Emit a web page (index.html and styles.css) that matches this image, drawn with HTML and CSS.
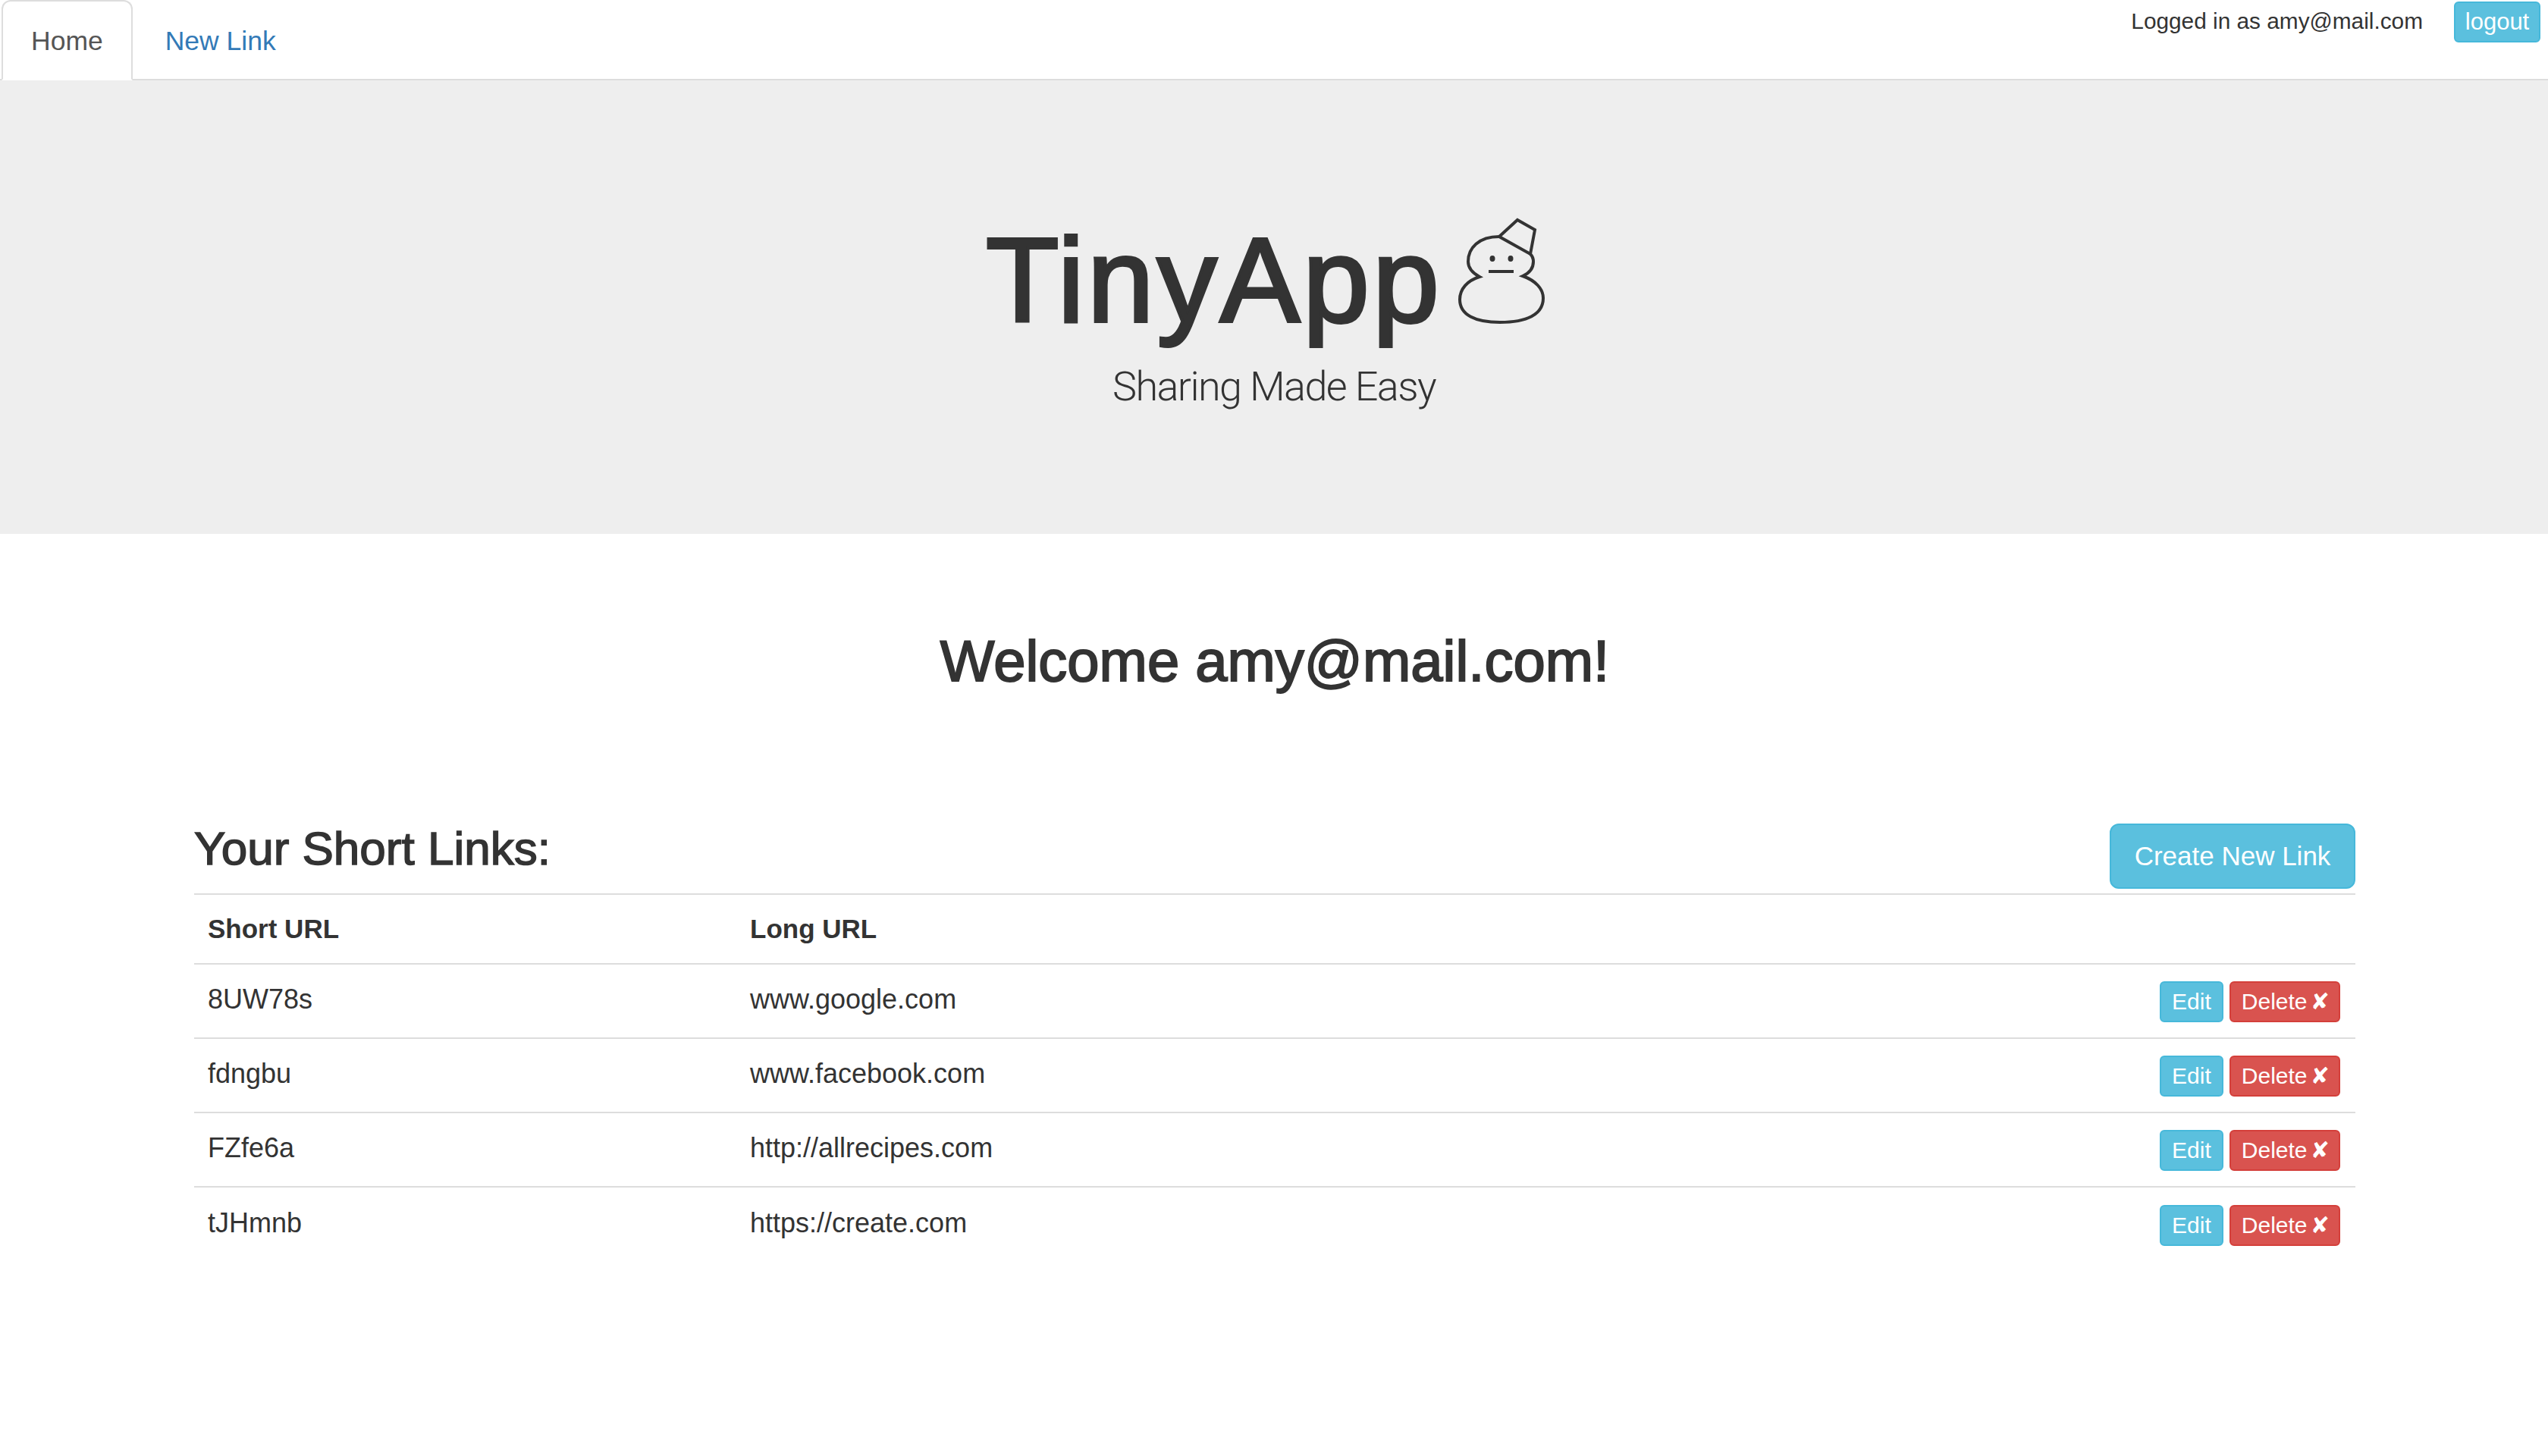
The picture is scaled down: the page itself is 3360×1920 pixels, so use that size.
FILE: index.html
```html
<!DOCTYPE html>
<html lang="en">
<head>
    <meta charset="UTF-8">
    <title>TinyApp</title>
    <link rel="stylesheet" href="styles.css">
</head>
<body>
    <nav class="topnav">
        <ul class="tabs">
            <li class="tab active"><a href="#">Home</a></li>
            <li class="tab"><a href="#">New Link</a></li>
        </ul>
        <div class="user-box">
            <span class="user-label">Logged in as amy@mail.com</span>
            <button class="btn btn-info btn-logout">logout</button>
        </div>
    </nav>

    <header class="hero">
        <h1 class="hero-title">
            <span>TinyApp</span>
            <svg class="snowman" viewBox="0 0 200 180" fill="none" stroke="#333" stroke-width="4">
                <path d="M97 52 L121 30 L144 43 L138 75 Z"/>
                <path d="M97 52 C70 52 56 67 56 85 C56 94 62 100 71 105 C55 110 45 121 45 135 C45 155 65 165 98 165 C133 165 155 155 155 133 C155 121 145 110 128 104 C137 100 142 94 142 85 C142 81 141 78 138 75"/>
                <ellipse cx="88" cy="81" rx="3.5" ry="4" fill="#333" stroke="none"/>
                <ellipse cx="112" cy="81" rx="3.5" ry="4" fill="#333" stroke="none"/>
                <path d="M83 98 H116"/>
            </svg>
        </h1>
        <p class="hero-sub">Sharing Made Easy</p>
    </header>

    <main class="container">
        <h2 class="welcome">Welcome amy@mail.com!</h2>

        <div class="links-head">
            <h3>Your Short Links:</h3>
            <button class="btn btn-info btn-create">Create New Link</button>
        </div>

        <table class="links">
            <thead>
                <tr>
                    <th class="col-short">Short URL</th>
                    <th>Long URL</th>
                    <th></th>
                </tr>
            </thead>
            <tbody>
                <tr>
                    <td>8UW78s</td>
                    <td>www.google.com</td>
                    <td class="actions"><button class="btn btn-info btn-sm">Edit</button><button class="btn btn-danger btn-sm">Delete <span class="cross">✘</span></button></td>
                </tr>
                <tr>
                    <td>fdngbu</td>
                    <td>www.facebook.com</td>
                    <td class="actions"><button class="btn btn-info btn-sm">Edit</button><button class="btn btn-danger btn-sm">Delete <span class="cross">✘</span></button></td>
                </tr>
                <tr>
                    <td>FZfe6a</td>
                    <td>http://allrecipes.com</td>
                    <td class="actions"><button class="btn btn-info btn-sm">Edit</button><button class="btn btn-danger btn-sm">Delete <span class="cross">✘</span></button></td>
                </tr>
                <tr>
                    <td>tJHmnb</td>
                    <td>https://create.com</td>
                    <td class="actions"><button class="btn btn-info btn-sm">Edit</button><button class="btn btn-danger btn-sm">Delete <span class="cross">✘</span></button></td>
                </tr>
            </tbody>
        </table>
    </main>
</body>
</html>
```

FILE: styles.css
```css
* {
    box-sizing: border-box;
}

body {
    margin: 0;
    font-family: "Liberation Sans", Arial, sans-serif;
    font-size: 36px;
    color: #333;
    background-color: #fff;
}

/* Top nav */
.topnav {
    display: flex;
    justify-content: space-between;
    height: 106px;
    border-bottom: 2px solid #ddd;
}

.tabs {
    display: flex;
    list-style: none;
    margin: 0;
    padding: 0 0 0 2px;
}

.tab {
    height: 106px;
}

.tab a {
    display: block;
    height: 106px;
    padding: 32px 37px 0;
    margin-right: 4px;
    border: 2px solid transparent;
    border-radius: 12px 12px 0 0;
    color: #337ab7;
    font-size: 35.5px;
    text-decoration: none;
    line-height: 40px;
}

.tab.active a {
    color: #555;
    background-color: #fff;
    border-color: #ddd;
    border-bottom-color: #fff;
}

.user-box {
    display: flex;
    align-items: flex-start;
    padding: 2px 10px 0 0;
}

.user-label {
    font-size: 29.8px;
    line-height: 52px;
    margin-right: 41px;
}

/* Buttons */
.btn {
    font-family: inherit;
    color: #fff;
    border: 2px solid transparent;
    cursor: pointer;
}

.btn-info {
    background-color: #5bc0de;
    border-color: #46b8da;
}

.btn-danger {
    background-color: #d9534f;
    border-color: #d43f3a;
}

.btn-logout {
    width: 114px;
    height: 54px;
    padding: 0;
    font-size: 31px;
    border-radius: 6px;
}

.btn-create {
    width: 324px;
    height: 86px;
    padding: 0;
    font-size: 35px;
    border-radius: 12px;
}

.btn-sm {
    height: 54px;
    padding: 0 14px;
    font-size: 30px;
    border-radius: 6px;
    margin-left: 8px;
}

.cross {
    margin: 0 -2px 0 -4px;
    font-family: "DejaVu Sans", sans-serif;
    font-size: 30px;
    line-height: 30px;
}

/* Hero */
.hero {
    height: 598px;
    padding-top: 160px;
    background-color: #eee;
    text-align: center;
}

.hero-title {
    display: flex;
    justify-content: center;
    align-items: center;
    height: 190px;
    margin: 0;
    padding-left: 20px;
    font-size: 158px;
    font-weight: 400;
    letter-spacing: 4px;
}

.hero-title span {
    margin-top: 17px;
    -webkit-text-stroke: 4px #333;
}

.snowman {
    width: 200px;
    height: 180px;
    margin: 0 0 22px -22px;
}

.hero-sub {
    margin: 22px 0 0;
    font-family: Roboto, sans-serif;
    font-size: 54px;
    font-weight: 300;
    line-height: 64px;
    letter-spacing: -1.6px;
}

/* Main content */
.container {
    padding: 0 254px 0 256px;
}

.welcome {
    margin: 118px 0 0;
    font-size: 76px;
    font-weight: 400;
    line-height: 100px;
    text-align: center;
    -webkit-text-stroke: 2px #333;
}

.links-head {
    display: flex;
    justify-content: space-between;
    align-items: flex-start;
    margin-top: 164px;
}

.links-head h3 {
    margin: -2px 0 0;
    font-size: 62px;
    font-weight: 400;
    line-height: 70px;
    -webkit-text-stroke: 1.5px #333;
}

.links {
    width: 100%;
    margin-top: 6px;
    border-collapse: collapse;
}

.links th,
.links td {
    padding: 0 18px;
    text-align: left;
    border-top: 2px solid #ddd;
}

.links th {
    height: 92px;
    font-weight: 700;
    font-size: 35px;
}

.links td {
    height: 98px;
    padding-bottom: 4px;
}

.col-short {
    width: 715px;
}

.links .actions {
    padding: 2px 20px 0 0;
    text-align: right;
    white-space: nowrap;
}
```
